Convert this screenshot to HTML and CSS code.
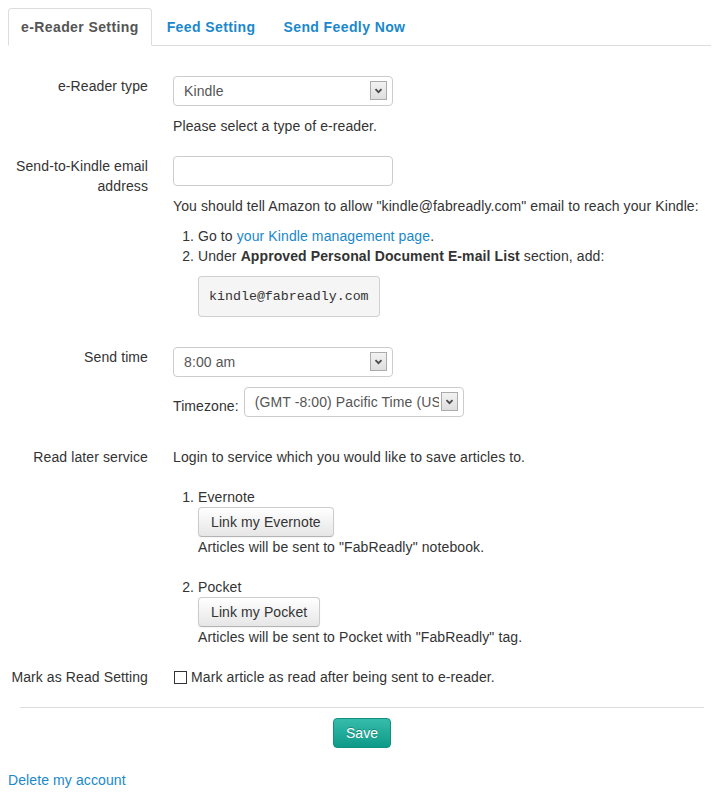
FILE: index.html
```html
<!DOCTYPE html>
<html>
<head>
<meta charset="utf-8">
<link rel="stylesheet" href="styles.css">
</head>
<body>
<ul class="tabs">
  <li class="tab active"><a href="#">e-Reader Setting</a></li>
  <li class="tab"><a href="#">Feed Setting</a></li>
  <li class="tab"><a href="#">Send Feedly Now</a></li>
</ul>

<form class="form">
  <div class="group">
    <label class="label">e-Reader type</label>
    <div class="controls">
      <span class="select-wrap">
        <select class="select"><option>Kindle</option></select>
        <span class="arrow"><svg width="9" height="6" viewBox="0 0 9 6"><path d="M1.5 1.2 L4.5 4.2 L7.5 1.2" fill="none" stroke="#4a4a4a" stroke-width="1.8"/></svg></span>
      </span>
      <p class="help">Please select a type of e-reader.</p>
    </div>
  </div>

  <div class="group">
    <label class="label">Send-to-Kindle email address</label>
    <div class="controls">
      <input class="input" type="text">
      <p class="help">You should tell Amazon to allow "kindle@fabreadly.com" email to reach your Kindle:</p>
      <ol class="steps">
        <li>Go to <a class="link" href="#">your Kindle management page</a>.</li>
        <li>Under <b>Approved Personal Document E-mail List</b> section, add:
          <pre class="code">kindle@fabreadly.com</pre>
        </li>
      </ol>
    </div>
  </div>

  <div class="group">
    <label class="label">Send time</label>
    <div class="controls">
      <span class="select-wrap">
        <select class="select"><option>8:00 am</option></select>
        <span class="arrow"><svg width="9" height="6" viewBox="0 0 9 6"><path d="M1.5 1.2 L4.5 4.2 L7.5 1.2" fill="none" stroke="#4a4a4a" stroke-width="1.8"/></svg></span>
      </span>
      <div class="tz-row">
        <span class="tz-label">Timezone:</span>
        <span class="select-wrap">
          <select class="select"><option>(GMT -8:00) Pacific Time (US &amp; Canada)</option></select>
          <span class="arrow"><svg width="9" height="6" viewBox="0 0 9 6"><path d="M1.5 1.2 L4.5 4.2 L7.5 1.2" fill="none" stroke="#4a4a4a" stroke-width="1.8"/></svg></span>
        </span>
      </div>
    </div>
  </div>

  <div class="group">
    <label class="label">Read later service</label>
    <div class="controls">
      <p class="text intro">Login to service which you would like to save articles to.</p>
      <ol class="services">
        <li>Evernote
          <div><button type="button" class="btn">Link my Evernote</button></div>
          <div>Articles will be sent to "FabReadly" notebook.</div>
        </li>
        <li>Pocket
          <div><button type="button" class="btn">Link my Pocket</button></div>
          <div>Articles will be sent to Pocket with "FabReadly" tag.</div>
        </li>
      </ol>
    </div>
  </div>

  <div class="group">
    <label class="label">Mark as Read Setting</label>
    <div class="controls">
      <label class="check"><input type="checkbox" class="checkbox"> Mark article as read after being sent to e-reader.</label>
    </div>
  </div>

  <div class="actions">
    <button type="button" class="btn-save">Save</button>
  </div>
</form>

<a class="link delete" href="#">Delete my account</a>
</body>
</html>
```

FILE: styles.css
```css
body {
  margin: 8px;
  font-family: "Liberation Sans", Arial, sans-serif;
  font-size: 14px;
  line-height: 20px;
  letter-spacing: 0.1px;
  color: #333;
  background: #fff;
}

a { text-decoration: none; }
.link { color: #1a88cc; }

.tabs {
  list-style: none;
  margin: 0 -8px 30px 0;
  padding: 0;
  display: flex;
  border-bottom: 1px solid #ddd;
}
.tab {
  margin-right: 2px;
  margin-bottom: -1px;
}
.tab a {
  display: block;
  padding: 8px 12px;
  line-height: 20px;
  letter-spacing: 0.4px;
  border: 1px solid transparent;
  border-radius: 4px 4px 0 0;
  font-weight: bold;
  color: #1a88cc;
}
.tab.active a {
  color: #555;
  background: #fff;
  border-color: #ddd #ddd transparent;
}

.form { margin: 0; }

.group {
  display: grid;
  grid-template-columns: 140px 1fr;
  column-gap: 25px;
  margin-bottom: 20px;
}
.label {
  text-align: right;
  line-height: 20px;
}
.controls { min-width: 0; }

.help, .text { margin: 10px 0 0; }
.intro { margin: 0 0 20px; }

.select-wrap {
  position: relative;
  display: inline-block;
  vertical-align: top;
  width: 220px;
  height: 30px;
}
.select {
  -webkit-appearance: none;
  appearance: none;
  box-sizing: border-box;
  width: 220px;
  height: 30px;
  margin: 0;
  padding: 0 24px 0 10px;
  border: 1px solid #ccc;
  border-radius: 4px;
  background: #fff;
  font-family: "Liberation Sans", Arial, sans-serif;
  font-size: 14px;
  letter-spacing: 0.1px;
  color: #555;
  overflow: hidden;
}
.arrow {
  position: absolute;
  top: 5px;
  right: 6px;
  box-sizing: border-box;
  width: 17px;
  height: 19px;
  border: 1px solid #ababab;
  background: linear-gradient(#f2f2f2, #dedede);
  display: flex;
  align-items: center;
  justify-content: center;
  pointer-events: none;
}

.input {
  box-sizing: border-box;
  width: 220px;
  height: 30px;
  margin: 0;
  padding: 4px 6px;
  border: 1px solid #ccc;
  border-radius: 4px;
  font-family: "Liberation Sans", Arial, sans-serif;
  font-size: 14px;
  display: block;
}

.steps {
  margin: 10px 0 0;
  padding-left: 25px;
}
.code {
  width: fit-content;
  margin: 10px 0 10px;
  padding: 9.5px 10px;
  font-family: "Liberation Mono", "DejaVu Sans Mono", monospace;
  font-size: 13.3px;
  line-height: 20px;
  letter-spacing: 0;
  color: #333;
  background: #f5f5f5;
  border: 1px solid rgba(0,0,0,.15);
  border-radius: 4px;
}

.tz-row {
  display: flex;
  align-items: flex-start;
  gap: 5px;
  margin-top: 10px;
  margin-bottom: 10px;
}
.tz-label { padding-top: 9px; }

.services {
  margin: 0;
  padding-left: 25px;
}
.services li { margin-bottom: 20px; }
.services li:last-child { margin-bottom: 0; }

.btn {
  display: inline-block;
  box-sizing: border-box;
  height: 30px;
  padding: 4px 12px;
  font-family: "Liberation Sans", Arial, sans-serif;
  font-size: 14px;
  line-height: 20px;
  letter-spacing: 0.1px;
  color: #333;
  background: linear-gradient(#fff, #e6e6e6);
  border: 1px solid #ccc;
  border-bottom-color: #b3b3b3;
  border-radius: 4px;
  box-shadow: inset 0 1px 0 rgba(255,255,255,.2), 0 1px 2px rgba(0,0,0,.05);
  vertical-align: top;
}

.check {
  display: flex;
  align-items: center;
  gap: 4px;
  padding-left: 1px;
}
.checkbox {
  -webkit-appearance: none;
  appearance: none;
  width: 13px;
  height: 13px;
  margin: 0;
  border: 1px solid #333;
  background: #fff;
  border-radius: 0;
}

.actions {
  margin-left: 12px;
  width: 684px;
  border-top: 1px solid #ddd;
  padding-top: 10px;
  text-align: center;
}
.btn-save {
  box-sizing: border-box;
  height: 30px;
  padding: 4px 12px;
  font-family: "Liberation Sans", Arial, sans-serif;
  font-size: 14px;
  line-height: 20px;
  color: #fff;
  text-shadow: 0 -1px 0 rgba(0,0,0,.25);
  background: linear-gradient(#36bcab, #0e9a88);
  border: 1px solid #11907f;
  border-radius: 4px;
}

.delete {
  display: inline-block;
  margin-top: 22px;
}
```
